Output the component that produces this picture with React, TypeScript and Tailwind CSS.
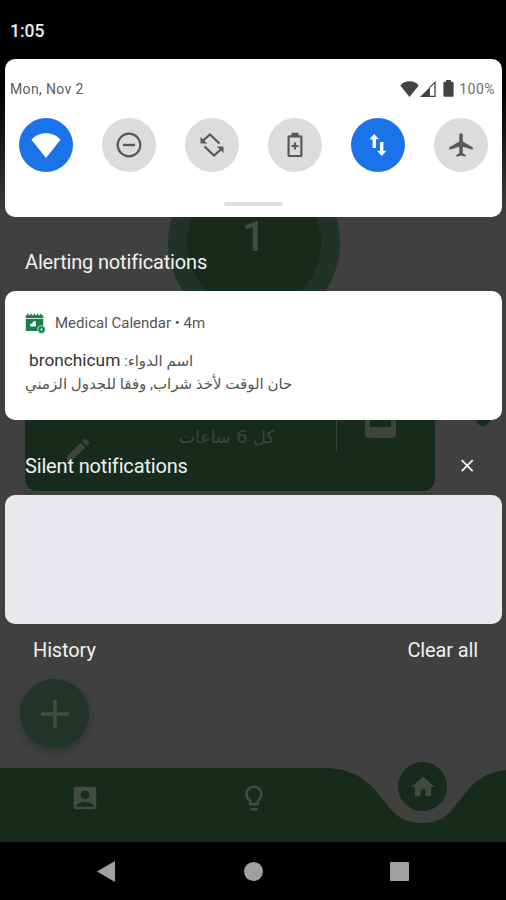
import type { ReactNode } from "react";
import {
  MdAccountBox,
  MdAirplanemodeActive,
  MdEdit,
  MdHome,
  MdLightbulbOutline,
} from "react-icons/md";

function WifiIcon({ className }: { className: string }) {
  return (
    <svg viewBox="0 0 30 25" className={className} fill="currentColor" aria-hidden="true">
      <path d="M15 25 L0.5 6.8 C4 2.5 9 0.3 15 0.3 S26 2.5 29.5 6.8 Z" />
    </svg>
  );
}

function SignalIcon() {
  return (
    <svg viewBox="0 0 16 16" className="h-4 w-4 text-[#444]" aria-hidden="true">
      <path d="M0 16 L10 6 V16 Z" fill="currentColor" />
      <path d="M9.5 6.6 L15 1.4 V15.3 H9.5" fill="none" stroke="currentColor" strokeWidth={1.3} />
    </svg>
  );
}

function BatteryIcon() {
  return (
    <svg viewBox="0 0 11 17" className="h-[17px] w-[11px] text-[#444]" fill="currentColor" aria-hidden="true">
      <path d="M3 0 H8 V1.8 H9.5 Q10.6 1.8 10.6 3 V15.5 Q10.6 16.7 9.5 16.7 H1.5 Q0.4 16.7 0.4 15.5 V3 Q0.4 1.8 1.5 1.8 H3 Z" />
    </svg>
  );
}

function DndIcon() {
  return (
    <svg viewBox="0 0 26 26" className="h-[26px] w-[26px]" fill="none" stroke="currentColor" aria-hidden="true">
      <circle cx="13" cy="13" r="11.3" strokeWidth={2.2} />
      <path d="M7 13 H19" strokeWidth={2.4} />
    </svg>
  );
}

function RotateIcon() {
  return (
    <svg viewBox="0 0 26 26" className="h-[26px] w-[26px]" fill="none" stroke="currentColor" strokeWidth={2.3} aria-hidden="true">
      <path d="M3.5 9 L11 2.5 L20.5 11.5" />
      <path d="M5.5 14.5 L15 23.5 L22.5 17" />
      <path d="M1.5 5 V11.4 H8.2 Z M24.5 21 V14.6 H17.8 Z" fill="currentColor" stroke="none" />
    </svg>
  );
}

function BatterySaverIcon() {
  return (
    <svg viewBox="0 0 16 26" className="h-[26px] w-4" fill="none" stroke="currentColor" aria-hidden="true">
      <rect x="1.6" y="4.4" width="12.8" height="19.6" rx="0.5" strokeWidth={2.2} />
      <path d="M4.5 2.4 H11.5" strokeWidth={3.4} />
      <path d="M8 10.5 V17.5 M4.5 14 H11.5" strokeWidth={2.2} />
    </svg>
  );
}

function DataIcon() {
  return (
    <svg viewBox="0 0 18 24" className="h-6 w-[18px]" fill="currentColor" aria-hidden="true">
      <path d="M5.2 1 L10 6.2 H7 V15 H3.6 V6.2 H0.6 Z" />
      <path d="M12.8 23 L8 17.8 H11 V9 H14.4 V17.8 H17.4 Z" />
    </svg>
  );
}

function CloseIcon() {
  return (
    <svg viewBox="0 0 18 18" className="h-[18px] w-[18px]" fill="none" stroke="currentColor" strokeWidth={1.9} aria-hidden="true">
      <path d="M3.7 3.2 L14.7 14.2 M14.7 3.2 L3.7 14.2" />
    </svg>
  );
}

function CalendarIcon() {
  return (
    <svg viewBox="0 0 21 21" className="h-[21px] w-[21px]" aria-hidden="true">
      <path d="M0.8 5.8 H18.2 V18 H0.8 Z" fill="#168045" />
      <path d="M0.8 2.2 H18.2 V5 H0.8 Z" fill="#168045" />
      <path d="M3 0.7 V4 M6.2 0.7 V4 M9.4 0.7 V4 M12.6 0.7 V4 M15.8 0.7 V4" stroke="#168045" strokeWidth={1.3} />
      <path d="M5.2 13.6 V11.2 L7.2 10.2 L8.5 8.2 H10.8 V13.6 Z" fill="#fff" />
      <circle cx="16.5" cy="16.5" r="3.9" fill="#168045" stroke="#fff" strokeWidth={0.7} />
      <path d="M14.8 16.5 H18 M16.5 14.8 V18" stroke="#a9d5bc" strokeWidth={1} />
    </svg>
  );
}

const TILES: { name: string; on: boolean; icon: ReactNode }[] = [
  { name: "Wi-Fi", on: true, icon: <WifiIcon className="h-[25px] w-[30px]" /> },
  { name: "Do not disturb", on: false, icon: <DndIcon /> },
  { name: "Auto-rotate", on: false, icon: <RotateIcon /> },
  { name: "Battery saver", on: false, icon: <BatterySaverIcon /> },
  { name: "Mobile data", on: true, icon: <DataIcon /> },
  { name: "Airplane mode", on: false, icon: <MdAirplanemodeActive size={28} /> },
];

// The app that sits dimmed behind the notification shade
function DimmedApp() {
  return (
    <div className="flex h-[900px] w-full flex-col bg-[#404040]">
      <div className="h-[157px] shrink-0" />
      <div className="ml-[168px] flex h-[172px] w-[172px] shrink-0 items-center justify-center rounded-full bg-[#203329]">
        <div className="flex h-[134px] w-[134px] items-center justify-center rounded-full bg-[#172b1c] pb-[13px] text-[42px] font-medium text-[#434b45]">
          1
        </div>
      </div>

      <div className="mt-[11px] flex h-[151px] shrink-0 items-start">
        <div className="ml-[25px] flex h-full w-[410px] rounded-xl bg-[#172b1c] text-[#404240]">
          <div className="flex w-[104px] items-end pb-[26px] pl-[38px]">
            <MdEdit size={30} />
          </div>
          <div className="flex flex-1 items-end justify-center pb-[42px]">
            <span dir="rtl" className="whitespace-nowrap font-['DejaVu_Sans',sans-serif] text-[17.5px] leading-6">
              كل 6 ساعات
            </span>
          </div>
          <div className="mb-10 ml-3 w-px bg-[#404240]" />
          <div className="flex w-[98px] items-end pb-[53px] pl-7">
            <div className="h-10 w-[31px] rounded-sm border-x-[5px] border-b-[11px] border-[#404240]" />
          </div>
        </div>
        <div className="ml-[41px] mt-[72px] h-3.5 w-3.5 rounded-full bg-[#172b1c]" />
      </div>

      <div className="ml-5 mt-[188px] flex h-[69px] w-[69px] shrink-0 items-center justify-center rounded-full bg-[#203429] shadow-[0_4px_8px_rgba(0,0,0,0.25)]">
        <svg viewBox="0 0 28 28" className="h-7 w-7" stroke="#434b46" strokeWidth={3.4} aria-hidden="true">
          <path d="M0 14 H28 M14 0 V28" />
        </svg>
      </div>

      <div className="relative mt-[14px] h-20 shrink-0 text-[#424a44]">
        <svg viewBox="0 0 506 80" className="absolute inset-0 h-20 w-full" aria-hidden="true">
          <path
            d="M0 6 H322 C346 6 362 13 376 29 L388 44 C397 55 406 61 422 61 S447 55 455 44 L468 28 C478 16 489 10 506 8 V80 H0 Z"
            fill="#172b1c"
          />
        </svg>
        <div className="relative flex">
          <div className="flex w-[170px] justify-center pt-[21px]">
            <MdAccountBox size={30} />
          </div>
          <div className="flex w-[168px] justify-center pt-[21px]">
            <MdLightbulbOutline size={30} />
          </div>
          <div className="flex w-[168px] justify-center pl-px">
            <div className="flex h-[49px] w-[49px] items-center justify-center rounded-full bg-[#172b1c]">
              <MdHome size={28} />
            </div>
          </div>
        </div>
      </div>

      <div className="flex flex-1 items-center justify-between bg-black pl-[97px] pr-[97px]">
        <svg viewBox="0 0 18 21" className="h-[21px] w-[18px]" fill="#a0a0a0" aria-hidden="true">
          <path d="M0 10.5 L18 0 V21 Z" />
        </svg>
        <div className="ml-0.5 h-[19px] w-[19px] rounded-full bg-[#a0a0a0]" />
        <div className="h-[19px] w-[19px] rounded-[1px] bg-[#a0a0a0]" />
      </div>
    </div>
  );
}

function QuickSettings() {
  return (
    <section className="mx-[5px] flex h-[158px] w-[497px] flex-col rounded-[10px] bg-white">
      <div className="flex items-center justify-between pl-[5px] pr-[7px] pt-[21px] text-[14px] leading-[18px] text-[#5c5c5c]">
        <span className="tracking-[0.35px]">Mon, Nov 2</span>
        <div className="flex items-center">
          <WifiIcon className="h-4 w-[19px] text-[#444]" />
          <span className="-mt-px ml-px">
            <SignalIcon />
          </span>
          <span className="-mt-px ml-[7px]">
            <BatteryIcon />
          </span>
          <span className="ml-[5px] tracking-[0.5px] text-[#707070]">100%</span>
        </div>
      </div>
      <div className="mt-5 flex justify-between pl-[14px] pr-[14px]">
        {TILES.map((tile) => (
          <button
            key={tile.name}
            aria-label={tile.name}
            className={`flex h-[54px] w-[54px] items-center justify-center rounded-full ${
              tile.on ? "bg-[#1a73e8] text-white" : "bg-[#dcdcdc] text-[#595959]"
            }`}
          >
            {tile.icon}
          </button>
        ))}
      </div>
      <div className="mx-auto mt-[30px] h-1 w-[59px] rounded-full bg-[#dedede]" />
    </section>
  );
}

export default function App() {
  return (
    <main className="relative h-[900px] w-[506px] overflow-hidden font-[Roboto,sans-serif]">
      <DimmedApp />

      <div className="absolute inset-0 flex flex-col bg-linear-to-b from-black from-[90px] to-transparent to-[217px]">
        <div className="flex h-[59px] shrink-0 items-center pl-[10px] pt-[4px] text-[17.5px] font-medium text-[#ececec]">
          1:05
        </div>

        <QuickSettings />

        <h2 className="flex h-[74px] items-center pl-[25px] pt-4 text-[20px] tracking-[-0.16px] text-[#f1f1f1]">
          Alerting notifications
        </h2>
        <article className="mx-[5px] h-[129px] w-[497px] rounded-[10px] bg-white pl-5 pt-[21px]">
          <div className="flex items-center text-[15px] leading-[21px] text-[#555]">
            <CalendarIcon />
            <span className="ml-[9px] pt-px">Medical Calendar • 4m</span>
          </div>
          <div className="mt-[14px] flex flex-col items-start font-[Roboto,'DejaVu_Sans',sans-serif] text-[#555]">
            <p dir="rtl" className="ml-1 whitespace-nowrap text-[15px] leading-6">
              اسم الدواء: <span className="text-[17.3px] text-[#333]">bronchicum</span>
            </p>
            <p dir="rtl" className="whitespace-nowrap text-[15px] leading-[23px]">
              حان الوقت لأخذ شراب, وفقا للجدول الزمني
            </p>
          </div>
        </article>

        <div className="flex h-[75px] items-center justify-between pl-[25px] pr-[30px] pt-4 text-[#f1f1f1]">
          <h2 className="text-[20px] tracking-[-0.16px]">Silent notifications</h2>
          <CloseIcon />
        </div>
        <div className="mx-[5px] h-[129px] w-[497px] rounded-[10px] bg-[#e8e9ed]" />

        <div className="flex h-[52px] items-center justify-between pl-[33px] pr-[28px] text-[20px] tracking-[-0.13px] text-[#f1f1f1]">
          <button>History</button>
          <button>Clear all</button>
        </div>
      </div>
    </main>
  );
}
